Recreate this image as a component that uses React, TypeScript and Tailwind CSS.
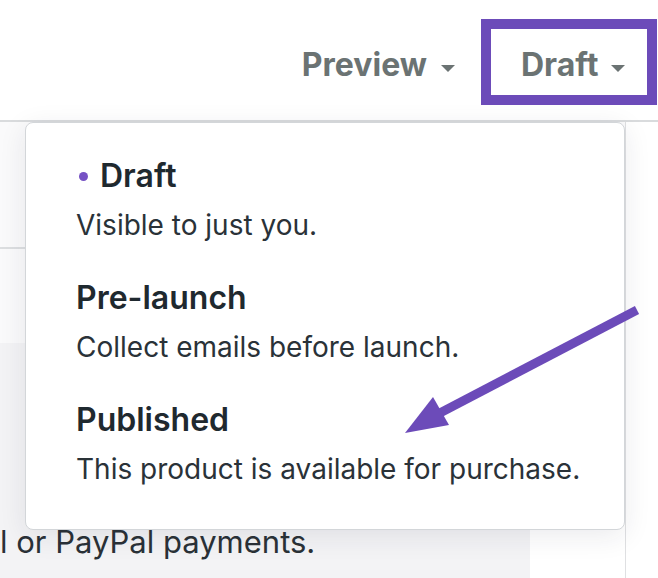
import React from 'react';

const Caret = () => (
  <svg width="14" height="7" viewBox="0 0 14 7" className="mt-[7px] shrink-0">
    <path d="M0 0h14L7 7z" fill="#6b7373" />
  </svg>
);

const statuses = [
  { name: 'Draft', desc: 'Visible to just you.', current: true },
  { name: 'Pre-launch', desc: 'Collect emails before launch.', current: false },
  { name: 'Published', desc: 'This product is available for purchase.', current: false },
];

const App: React.FC = () => {
  return (
    <div className="relative w-[658px] h-[578px] overflow-hidden bg-white font-['Inter',sans-serif]">
      <header className="h-[122px] border-b-2 border-[#d9dbdd] bg-white flex justify-end items-start pt-[19px] pr-[1px]">
        <button className="flex items-center h-[86px] pt-[6px] mr-[26px] text-[32px] leading-[40px] font-bold text-[#6b7373]">
          Preview
          <span className="ml-[14px] flex"><Caret /></span>
        </button>
        <div className="h-[86px] w-[176px] border-[10px] border-[#6c4bb9] flex items-center pt-[6px] pl-[30px] text-[32px] leading-[40px] font-bold text-[#6b7373]">
          Draft
          <span className="ml-[13px] flex"><Caret /></span>
        </div>
      </header>

      <div className="flex">
        <main className="w-[626px] border-r border-[#dfe0e2]">
          <div className="h-[127px] border-b-2 border-[#dcdee0] bg-[#fafafb]" />
          <div className="h-[94px] bg-[#fafafb]" />
          <div className="w-[530px] h-[235px] bg-[#f3f3f5] pt-[181px]">
            <p className="text-[31px] leading-[36px] text-[#2a3137] whitespace-nowrap">l or PayPal payments.</p>
          </div>
        </main>
        <div className="flex-1 bg-white" />
      </div>

      <div className="absolute left-[25px] top-[122px] w-[600px] h-[408px] bg-white border border-[#d3d6d9] rounded-[8px] shadow-[0_6px_28px_rgba(30,30,60,0.09)] pt-[33px] pl-[50px] flex flex-col gap-[35px]">
        {statuses.map(s => (
          <div key={s.name}>
            <div className="flex items-center h-[40px] text-[32px] leading-[40px] font-semibold text-[#1f292f]">
              {s.current && <span className="ml-[3px] mr-[12px] w-[9px] h-[9px] rounded-full bg-[#7652c4]" />}
              {s.name}
            </div>
            <p className="mt-[11px] text-[28px] leading-[36px] text-[#2a3238]">{s.desc}</p>
          </div>
        ))}
      </div>

      <svg className="absolute inset-0 pointer-events-none" width="658" height="578" viewBox="0 0 658 578">
        <line x1="637" y1="310" x2="438" y2="414" stroke="#6c4bb9" strokeWidth="9" />
        <path d="M405 433L433 397L449 425Z" fill="#6c4bb9" />
      </svg>
    </div>
  );
};

export default App;
